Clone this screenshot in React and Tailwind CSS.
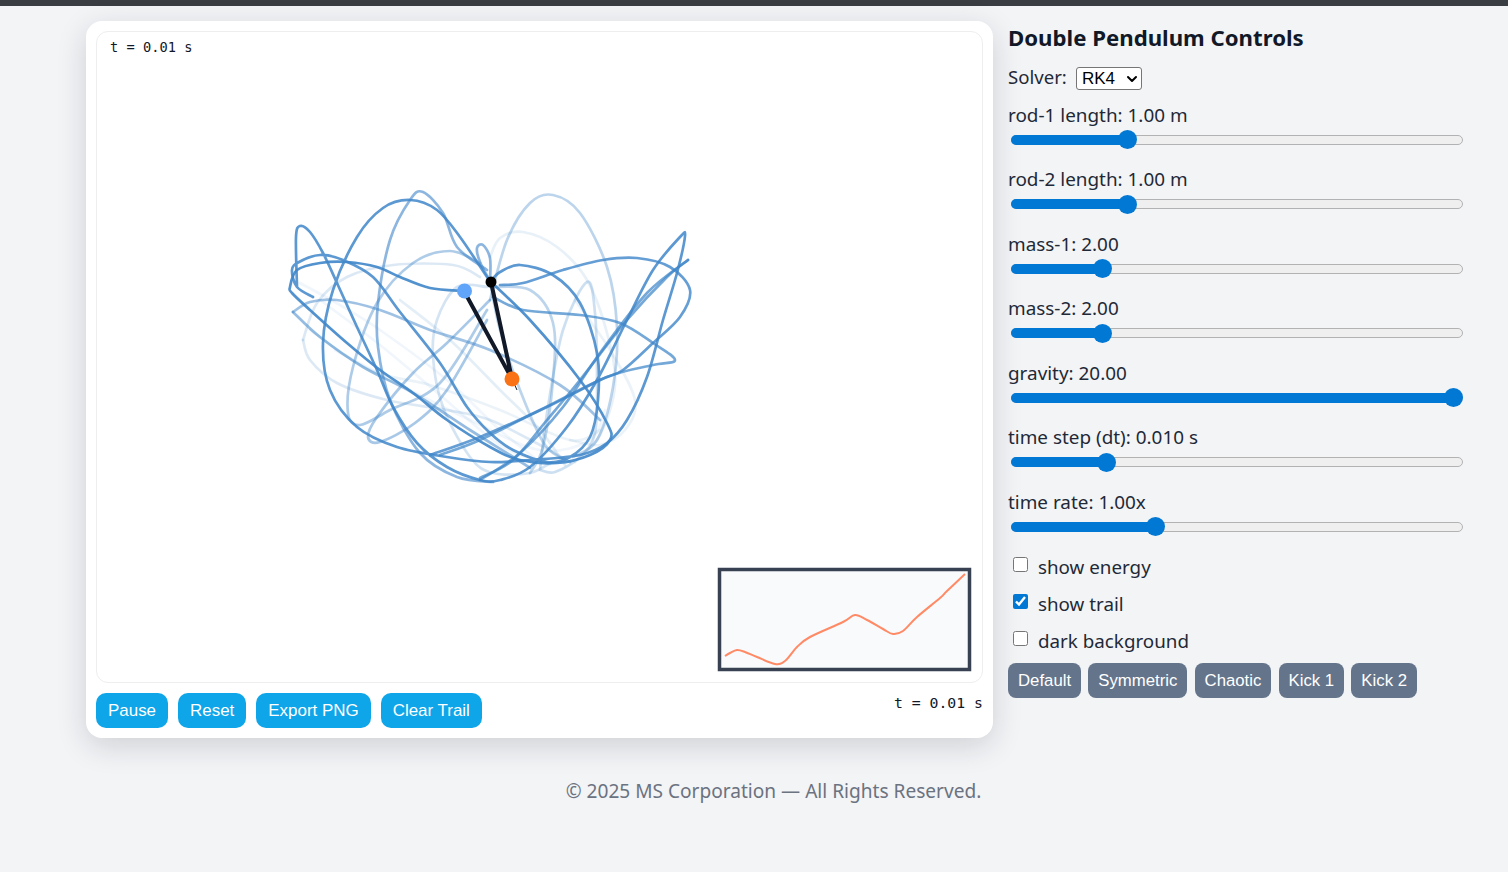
import React, { useState } from "react";
import { ChevronDown } from "lucide-react";

const MONO = "font-['DejaVu_Sans_Mono',monospace]";

// trail pieces, oldest (faint) first, in page pixels
const TRAIL = [
  { o: 0.08, p: [[300,283],[340,305],[380,330],[447,380],[500,430],[540,462]] },
  { o: 0.08, p: [[320,300],[380,345],[440,395],[500,445],[550,465]] },
  { o: 0.08, p: [[335,350],[400,385],[470,420],[540,450],[590,440],[605,410]] },
  { o: 0.1, p: [[310,330],[370,370],[430,385],[500,410],[570,440],[600,430]] },
  { o: 0.1, p: [[575,300],[610,350],[635,400],[625,430],[600,445],[570,440]] },
  { o: 0.12, p: [[490,257],[500,238],[523,232],[557,247],[587,280],[607,333],[615,385],[600,435],[575,462]] },
  { o: 0.14, p: [[400,300],[450,340],[500,390],[540,430],[565,465]] },
  { o: 0.18, p: [[303,340],[317,303],[347,277],[393,265],[453,265],[480,277]] },
  { o: 0.18, p: [[303,340],[310,360],[337,383],[387,400],[447,410],[490,420],[540,445],[570,462]] },
  { o: 0.22, p: [[487,287],[457,287],[437,320],[433,357],[443,407],[470,457],[493,473],[530,473],[552,462]] },
  { o: 0.26, p: [[540,470],[547,413],[563,330],[587,282],[595,313],[597,380],[595,433],[580,457],[555,472],[540,470]] },
  { o: 0.35, p: [[490,300],[507,240],[530,203],[553,195],[580,213],[607,267],[617,327],[613,387],[597,440],[573,457]] },
  { o: 0.35, p: [[490,287],[530,290],[553,323],[553,380],[543,447],[530,473]] },
  { o: 0.35, p: [[490,281],[500,330],[520,390],[545,445],[570,462]] },
  { o: 0.42, p: [[480,263],[450,251],[413,263],[377,303],[353,367],[348,413],[360,425],[390,410],[440,383],[487,310]] },
  { o: 0.45, p: [[490,300],[447,343],[413,373],[377,417],[368,437],[380,442],[415,423],[447,390],[487,320]] },
  { o: 0.5, p: [[293,312],[310,302],[337,300],[380,310],[430,330],[490,350],[560,385],[600,420]] },
  { o: 0.55, p: [[293,312],[320,337],[363,367],[413,393],[470,430],[510,455],[530,468]] },
  { o: 0.6, p: [[490,281],[480,262],[477,248],[483,245],[490,258],[490,281]] },
  { o: 0.6, p: [[487,270],[457,247],[443,213],[423,192],[410,200],[390,240],[378,303],[378,347],[390,400],[420,453],[457,477],[493,482]] },
  { o: 0.72, p: [[493,297],[523,310],[580,315],[620,323],[653,343],[675,360],[653,365],[607,377],[540,410],[480,440],[440,455]] },
  { o: 0.72, p: [[688,260],[647,293],[600,353],[563,407],[520,453],[480,480]] },
  { o: 0.72, p: [[688,260],[667,277],[627,320],[580,380],[547,420],[513,460],[480,478]] },
  { o: 0.8, p: [[500,285],[523,283],[563,270],[603,260],[637,258],[670,267],[690,290],[680,317],[653,343],[623,370],[600,380],[547,407],[480,437],[430,455]] },
  { o: 0.85, p: [[297,286],[296,237],[300,226],[310,232],[323,253],[337,283],[357,327],[377,370],[393,407],[417,443],[447,467],[480,480],[500,480],[530,467],[567,427],[597,380],[627,320],[653,270],[680,237],[685,236],[677,273],[663,320],[647,377],[627,420],[607,443],[580,455],[530,460],[490,462],[447,457],[397,447],[357,427],[330,390],[323,343],[333,290],[357,237],[383,208],[410,200],[437,210],[460,237],[487,277],[490,281],[500,272],[520,265],[553,275],[580,303],[597,353],[598,400],[590,437],[570,457],[547,462],[513,450],[490,433],[467,407],[440,363],[400,312],[373,277],[343,260],[320,255],[299,262],[292,270],[297,287],[313,297]] },
  { o: 0.9, p: [[464,291],[430,288],[400,277],[377,267],[347,262],[320,263],[297,270],[290,287],[292,293],[310,310],[347,343],[380,370],[413,393],[447,420],[490,447],[520,460],[557,463],[590,455],[610,440],[607,423],[580,380],[530,320],[490,281]] },
];

const ENERGY = [[725,656],[730,653],[737,650],[745,652],[757,657],[775,664],[785,661],[797,647],[810,637],[843,622],[855,615],[867,620],[883,629],[893,634],[903,631],[917,617],[940,598],[947,591],[965,574]];

function toPath(pts) {
  // catmull-rom through the points
  let d = `M${pts[0][0]} ${pts[0][1]}`;
  for (let i = 0; i < pts.length - 1; i++) {
    const a = pts[i - 1] || pts[i];
    const b = pts[i];
    const c = pts[i + 1];
    const e = pts[i + 2] || c;
    const c1x = b[0] + (c[0] - a[0]) / 6;
    const c1y = b[1] + (c[1] - a[1]) / 6;
    const c2x = c[0] - (e[0] - b[0]) / 6;
    const c2y = c[1] - (e[1] - b[1]) / 6;
    d += ` C${c1x.toFixed(1)} ${c1y.toFixed(1)} ${c2x.toFixed(1)} ${c2y.toFixed(1)} ${c[0]} ${c[1]}`;
  }
  return d;
}

function PendulumCanvas() {
  return (
    <svg viewBox="97 32 885 650" className="block w-[885px] h-[650px]">
      <g fill="none" stroke="#3f86c9" strokeWidth="2.7" strokeLinecap="round" strokeLinejoin="round">
        {TRAIL.map((t, i) => (
          <path key={i} d={toPath(t.p)} strokeOpacity={t.o} />
        ))}
      </g>
      <path d="M512 379 L517 390" stroke="#111827" strokeWidth="1" />
      <path d="M491 282 L512 379 L464 291" fill="none" stroke="#111827" strokeWidth="4" />
      <circle cx="491" cy="282" r="5.5" fill="#000" />
      <circle cx="464.5" cy="291" r="7.5" fill="#60a5fa" />
      <circle cx="512" cy="379" r="7.5" fill="#f97316" />
      <rect x="719.5" y="569.5" width="250" height="100" fill="#f8fafc" stroke="#374151" strokeWidth="3.5" />
      <path d={toPath(ENERGY)} fill="none" stroke="#ff8a65" strokeWidth="2" />
    </svg>
  );
}

function Slider({ label, initial }) {
  const [value, setValue] = useState(initial);
  return (
    <div className="flex flex-col">
      <label className="h-[27px] leading-[29px] text-[18.9px] text-[#1f2937]">{label}</label>
      <div className="relative w-[452px] h-[10px] ml-[3px] mt-[6.8px] mb-[9.2px] rounded-full border border-[#b2b2b2] bg-[#efefef]">
        {/* blue part stops under the thumb centre */}
        <div
          className="absolute -left-px -top-px h-[10px] rounded-full bg-[#0078d4]"
          style={{ width: `calc(9.5px + (100% - 17px) * ${value / 100})` }}
        />
        <input
          type="range"
          min="0"
          max="100"
          step="0.1"
          value={value}
          onChange={(e) => setValue(Number(e.target.value))}
          className="absolute -left-px -top-px w-[452px] h-[10px] m-0 appearance-none bg-transparent [&::-webkit-slider-thumb]:appearance-none [&::-webkit-slider-thumb]:w-[19px] [&::-webkit-slider-thumb]:h-[19px] [&::-webkit-slider-thumb]:rounded-full [&::-webkit-slider-thumb]:bg-[#0078d4]"
        />
      </div>
    </div>
  );
}

function Check({ label, checked }) {
  return (
    <label className="flex items-center h-[37px] text-[18.8px] leading-[30px] text-[#1f2937]">
      <input type="checkbox" defaultChecked={checked} className="w-[15px] h-[15px] ml-[5px] mr-[10px] -mt-[3px] accent-[#0078d4]" />
      <span className="pt-[2px]">{label}</span>
    </label>
  );
}

function App() {
  const sliders = [
    ["rod-1 length: 1.00 m", 24.8],
    ["rod-2 length: 1.00 m", 24.8],
    ["mass-1: 2.00", 18.9],
    ["mass-2: 2.00", 18.9],
    ["gravity: 20.00", 100],
    ["time step (dt): 0.010 s", 19.9],
    ["time rate: 1.00x", 31.2],
  ];

  return (
    <div className="min-h-[872px] bg-[#f3f4f6] font-['Noto_Sans',sans-serif]">
      <div className="h-[6px] bg-[#3a3d42]" />
      <div className="flex gap-[15px] pl-[86px] pt-[15px]">
        <div className="w-[907px] h-[717px] p-[10px] bg-white rounded-[16px] shadow-[0_8px_30px_rgba(15,23,42,0.16)]">
          <div className="relative w-[887px] h-[652px] border border-[#eeeeee] rounded-[12px] overflow-hidden">
            <PendulumCanvas />
            <span className={`absolute left-[13px] top-[5px] text-[13.7px] text-[#111827] whitespace-pre ${MONO}`}>t = 0.01 s</span>
          </div>
          <div className="flex items-start justify-between mt-[10px]">
            <div className="flex gap-[10px] font-['Liberation_Sans',sans-serif] text-[16.96px] text-white">
              <button className="h-[35px] px-[12px] rounded-[10px] bg-[#0ea5e9]">Pause</button>
              <button className="h-[35px] px-[12px] rounded-[10px] bg-[#0ea5e9]">Reset</button>
              <button className="h-[35px] px-[12px] rounded-[10px] bg-[#0ea5e9]">Export PNG</button>
              <button className="h-[35px] px-[12px] rounded-[10px] bg-[#0ea5e9]">Clear Trail</button>
            </div>
            <span className={`text-[14.8px] leading-[20px] text-[#111827] whitespace-pre ${MONO}`}>t = 0.01 s</span>
          </div>
        </div>

        <div className="w-[460px] flex flex-col">
          <h2 className="h-[34px] leading-[34px] text-[22.2px] font-bold text-[#111827]">Double Pendulum Controls</h2>
          <div className="flex items-center h-[46px] text-[18.6px] text-[#1f2937]">
            <span className="w-[68px] -mt-[2px]">Solver:</span>
            <div className="relative w-[66px] h-[23px]">
              <select className="block w-full h-full pl-[5px] appearance-none border border-[#767676] rounded-[3px] bg-white text-[17px] leading-[21px] text-black font-['Liberation_Sans',sans-serif]">
                <option>RK4</option>
                <option>Euler</option>
              </select>
              <ChevronDown size={16} strokeWidth={3} className="absolute right-[2px] top-[4px] text-black pointer-events-none" />
            </div>
          </div>
          <div className="flex flex-col gap-[11.5px]">
            {sliders.map(([label, initial]) => (
              <Slider key={label} label={label} initial={initial} />
            ))}
          </div>
          <div className="flex flex-col mt-[7px]">
            <Check label="show energy" />
            <Check label="show trail" checked />
            <Check label="dark background" />
          </div>
          <div className="flex gap-[7.2px] mt-[4px] font-['Liberation_Sans',sans-serif] text-[16.75px] text-white">
            <button className="h-[35px] px-[10px] rounded-[8px] bg-[#64748b]">Default</button>
            <button className="h-[35px] px-[10px] rounded-[8px] bg-[#64748b]">Symmetric</button>
            <button className="h-[35px] px-[10px] rounded-[8px] bg-[#64748b]">Chaotic</button>
            <button className="h-[35px] px-[10px] rounded-[8px] bg-[#64748b]">Kick 1</button>
            <button className="h-[35px] px-[10px] rounded-[8px] bg-[#64748b]">Kick 2</button>
          </div>
        </div>
      </div>
      <footer className="w-[907px] ml-[320px] mt-[38px] text-center text-[19.1px] leading-[30px] text-[#6b7280]">
        © 2025 MS Corporation — All Rights Reserved.
      </footer>
    </div>
  );
}

export default App;
